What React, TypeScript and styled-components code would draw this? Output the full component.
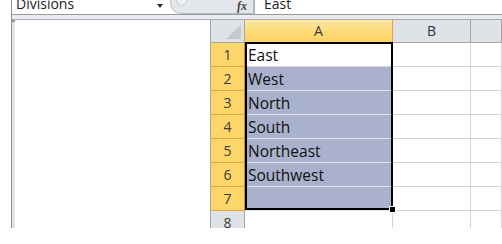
import React from 'react'
import styled, { createGlobalStyle } from 'styled-components'

const GlobalStyle = createGlobalStyle`
	html, body {
		margin: 0;
		padding: 0;
		background: #ffffff;
		overflow: hidden;
	}
	* {
		box-sizing: border-box;
	}
`

const Page = styled.div`
	width: 502px;
	height: 244px;
	background: #ffffff;
	overflow: hidden;
	font-family: 'Open Sans', 'Noto Sans', sans-serif;
`

const TopBar = styled.div`
	display: flex;
	height: 15px;
	margin-left: 11px;
	border-left: 1px solid #8d8d8d;
	border-bottom: 1px solid #9a9a9a;
	overflow: hidden;
`

const NameBox = styled.div`
	position: relative;
	width: 153px;
	flex: none;
	font-size: 14px;
	line-height: 14px;
	color: #1e1e1e;
	padding-left: 4px;
	margin-top: -3px;
	height: 17px;
`

const DropArrow = styled.span`
	position: absolute;
	right: 2px;
	top: 7px;
	width: 0;
	height: 0;
	border-left: 3.5px solid transparent;
	border-right: 3.5px solid transparent;
	border-top: 4px solid #333;
`

const FxArea = styled.div`
	position: relative;
	display: flex;
	justify-content: flex-end;
	width: 84px;
	flex: none;
	margin-left: 5px;
	margin-top: -8px;
	height: 22px;
	background: #e3e6eb;
	border: 1px solid #b8bec8;
	border-radius: 12px 0 0 12px;
	padding-right: 6px;
`

const Knob = styled.span`
	position: absolute;
	left: 5px;
	top: 2px;
	width: 11px;
	height: 11px;
	border-radius: 50%;
	background: #eef0f3;
	border: 1px solid #c9ced6;
`

const Fx = styled.span`
	font-family: 'Liberation Serif', serif;
	font-style: italic;
	font-weight: bold;
	font-size: 12px;
	line-height: 12px;
	margin-top: 7px;
	color: #444;
`

const FormulaInput = styled.div`
	flex: 1;
	border-left: 1px solid #b0b0b0;
	font-size: 14px;
	line-height: 14px;
	color: #1e1e1e;
	padding-left: 9px;
	margin-top: -3px;
`

const Gap = styled.div`
	height: 5px;
	margin-left: 11px;
	border-left: 1px solid #8d8d8d;
	background: #e9ebf1;
	border-bottom: 1px solid #a8acb4;
`

const Main = styled.div`
	display: flex;
	height: 208px;
`

const LeftPane = styled.div`
	width: 199px;
	margin-left: 11px;
	border-left: 1px solid #8d8d8d;
	flex: none;
	display: flex;
`

const PaneStrip = styled.div`
	width: 3px;
	background: #dfe3ea;
	border-top: 2px solid #8f949c;
`

const Sheet = styled.div`
	position: relative;
	flex: 1;
	overflow: hidden;
`

const Row = styled.div<{ $h: number }>`
	display: flex;
	height: ${p => p.$h}px;
	flex: none;
`

const Corner = styled.div`
	position: relative;
	width: 35px;
	flex: none;
	background: #dfe3e8;
	border-left: 1px solid #a6a6a6;
	border-right: 1px solid #a6a6a6;
	border-bottom: 1px solid #a6a6a6;
	&::after {
		content: '';
		position: absolute;
		right: 3px;
		bottom: 3px;
		width: 0;
		height: 0;
		border-left: 15px solid transparent;
		border-bottom: 14px solid #c3c8cf;
	}
`

const ColHeader = styled.div<{ $w?: number; $on?: boolean }>`
	width: ${p => (p.$w ? `${p.$w}px` : 'auto')};
	flex: ${p => (p.$w ? 'none' : '1')};
	display: flex;
	align-items: center;
	justify-content: center;
	font-size: 14px;
	color: ${p => (p.$on ? '#3b3b3b' : '#27354a')};
	background: ${p =>
		p.$on ? 'linear-gradient(#fbe9a6, #fdd873 60%, #fdd466)' : '#dfe3e8'};
	border-right: 1px solid ${p => (p.$on ? '#e2a542' : '#a6a6a6')};
	border-bottom: 1px solid ${p => (p.$on ? '#e2a542' : '#a6a6a6')};
	padding-bottom: 1px;
`

const RowHeader = styled.div<{ $on?: boolean }>`
	width: 35px;
	flex: none;
	display: flex;
	align-items: flex-end;
	justify-content: center;
	padding-bottom: 2px;
	font-size: 14px;
	color: #3a3a3a;
	background: ${p => (p.$on ? '#fdd66a' : '#dfe3e8')};
	border-left: 1px solid #a6a6a6;
	border-right: 1px solid ${p => (p.$on ? '#c38b34' : '#a6a6a6')};
	border-bottom: 1px solid ${p => (p.$on ? '#e2a542' : '#a6a6a6')};
`

const Cell = styled.div<{ $w?: number; $fill?: boolean }>`
	width: ${p => (p.$w ? `${p.$w}px` : 'auto')};
	flex: ${p => (p.$w ? 'none' : '1')};
	display: flex;
	align-items: flex-end;
	padding: 0 3px 0;
	font-size: 15.5px;
	color: #111;
	white-space: nowrap;
	background: ${p => (p.$fill ? '#aab1cc' : '#ffffff')};
	border-right: 1px solid #d4d4d4;
	border-bottom: 1px solid ${p => (p.$fill ? '#e2e4ec' : '#d4d4d4')};
`

const Selection = styled.div`
	position: absolute;
	left: 35px;
	top: 22px;
	width: 148px;
	height: 168px;
	border: 2px solid #000;
	pointer-events: none;
`

const FillHandle = styled.div`
	position: absolute;
	right: -4px;
	bottom: -4px;
	width: 5px;
	height: 5px;
	background: #000;
	outline: 1px solid #fff;
`

const regions = ['East', 'West', 'North', 'South', 'Northeast', 'Southwest', '']

const App = () => {
	return (
		<Page>
			<GlobalStyle />
			<TopBar>
				<NameBox>
					Divisions
					<DropArrow />
				</NameBox>
				<FxArea>
					<Knob />
					<Fx>fx</Fx>
				</FxArea>
				<FormulaInput>East</FormulaInput>
			</TopBar>
			<Gap />
			<Main>
				<LeftPane>
					<PaneStrip />
				</LeftPane>
				<Sheet>
					<Row $h={23}>
						<Corner />
						<ColHeader $w={148} $on>
							A
						</ColHeader>
						<ColHeader $w={78}>B</ColHeader>
						<ColHeader />
					</Row>
					{regions.map((name, i) => (
						<Row $h={24} key={i}>
							<RowHeader $on>{i + 1}</RowHeader>
							<Cell $w={148} $fill={i > 0}>
								{name}
							</Cell>
							<Cell $w={78} />
							<Cell />
						</Row>
					))}
					<Row $h={24}>
						<RowHeader>8</RowHeader>
						<Cell $w={148} />
						<Cell $w={78} />
						<Cell />
					</Row>
					<Selection>
						<FillHandle />
					</Selection>
				</Sheet>
			</Main>
		</Page>
	)
}

export default App
